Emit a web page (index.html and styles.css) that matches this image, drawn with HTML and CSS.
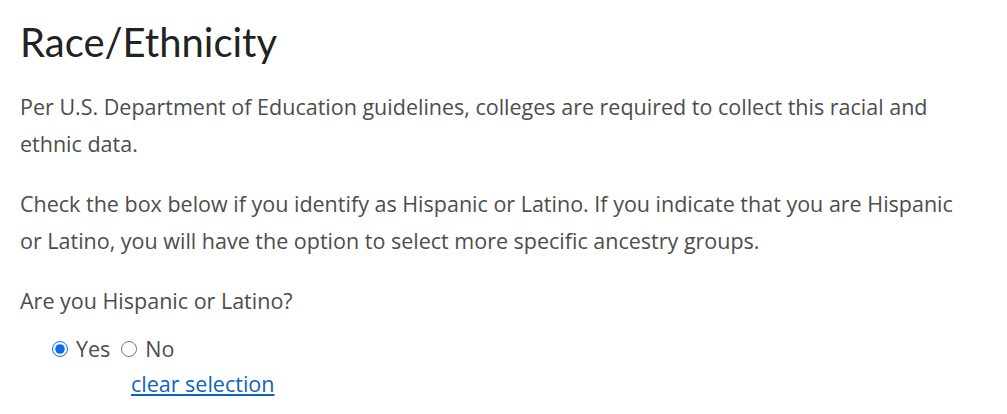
FILE: index.html
```html
<!DOCTYPE html>
<html lang="en">
<head>
    <meta charset="UTF-8">
    <title>Race/Ethnicity</title>
    <link rel="stylesheet" href="styles.css">
</head>
<body>
<div class="section">
    <h1 class="title">Race/Ethnicity</h1>
    <p class="text">Per U.S. Department of Education guidelines, colleges are required to collect this racial and ethnic data.</p>
    <p class="text">Check the box below if you identify as Hispanic or Latino. If you indicate that you are Hispanic or Latino, you will have the option to select more specific ancestry groups.</p>
    <div class="question">
        <div class="label">Are you Hispanic or Latino?</div>
        <div class="options">
            <label class="option"><input type="radio" name="hisp" checked> Yes</label>
            <label class="option"><input type="radio" name="hisp"> No</label>
        </div>
        <a href="#" class="clear">clear selection</a>
    </div>
</div>
</body>
</html>
```

FILE: styles.css
```css
*{
    margin: 0;
    padding: 0;
    box-sizing: border-box;
}
body{
    background: #ffffff;
    font-family: "Open Sans", sans-serif;
    color: #4d4d4d;
}
.section{
    width: 985px;
    padding: 18px 20px 0 20px;
}
.title{
    font-family: Lato, sans-serif;
    font-size: 40px;
    font-weight: 400;
    color: #222222;
    line-height: 48px;
    margin-bottom: 22px;
}
.text{
    font-size: 21.5px;
    line-height: 37px;
    margin-bottom: 23px;
}
.label{
    font-size: 21.5px;
    line-height: 37px;
}
.options{
    display: flex;
    gap: 11px;
    padding: 17px 0 0 32px;
    font-size: 21.5px;
    line-height: 26px;
}
.option{
    display: flex;
    align-items: center;
    gap: 8px;
}
.option input{
    width: 16px;
    height: 16px;
    margin: 0;
    accent-color: #0b6cf0;
}
.clear{
    display: inline-block;
    margin: 9px 0 0 111px;
    font-size: 21.5px;
    line-height: 26px;
    color: #0c64c0;
}
```
